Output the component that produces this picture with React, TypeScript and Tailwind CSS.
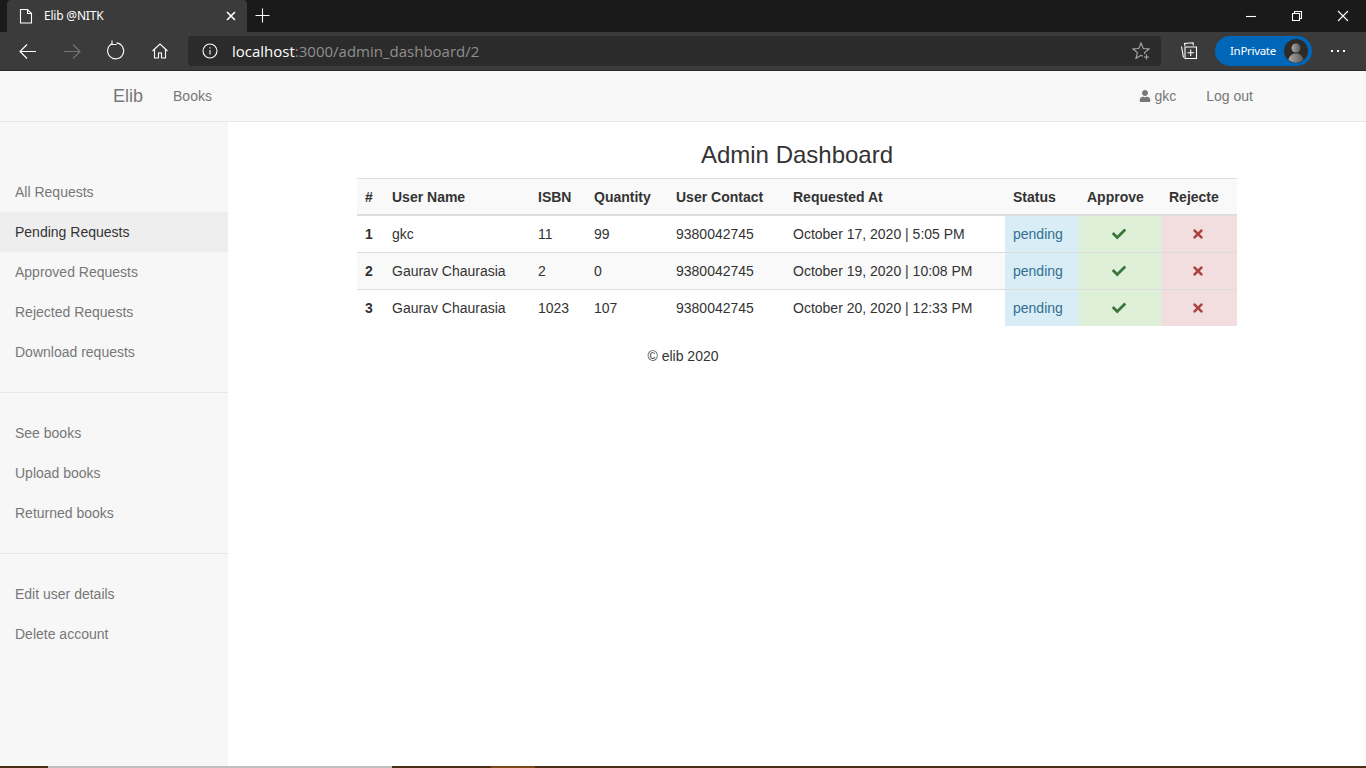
import React from "react";
import { FaCheck, FaTimes, FaUser } from "react-icons/fa";

const rows = [
  ["1", "gkc", "11", "99", "9380042745", "October 17, 2020 | 5:05 PM"],
  ["2", "Gaurav Chaurasia", "2", "0", "9380042745", "October 19, 2020 | 10:08 PM"],
  ["3", "Gaurav Chaurasia", "1023", "107", "9380042745", "October 20, 2020 | 12:33 PM"],
];
const headers = ["#", "User Name", "ISBN", "Quantity", "User Contact", "Requested At", "Status", "Approve", "Rejecte"];
const widths = [27, 146, 56, 82, 117, 220, 74, 82, 76];
const groups = [
  ["All Requests", "Pending Requests", "Approved Requests", "Rejected Requests", "Download requests"],
  ["See books", "Upload books", "Returned books"],
  ["Edit user details", "Delete account"],
];

function Stroke({ w = 20, h = 20, vb = "0 0 20 20", o = 1, children }: { w?: number; h?: number; vb?: string; o?: number; children: React.ReactNode }) {
  return (
    <svg width={w} height={h} viewBox={vb} fill="none" stroke="#fff" strokeWidth="1.1" opacity={o}>
      {children}
    </svg>
  );
}

function BrowserChrome() {
  return (
    <div className="flex flex-col h-[71px] font-['Open_Sans',sans-serif] text-white">
      <div className="flex h-[32px] bg-[#1a1a1a]">
        <div className="ml-[7px] w-[240px] h-[32px] bg-[#3b3b3b] rounded-t-[4px] flex items-center pl-[11px] pr-[10px]">
          <Stroke w={16} h={16} vb="0 0 16 16"><path d="M2.500 1.500h7l4 4v9.500h-11zM9.500 1.500v4h4" /></Stroke>
          <span className="ml-[10px] text-[12px] tracking-[-0.2px] flex-1 font-['Noto_Sans',sans-serif]">Elib @NITK</span>
          <Stroke w={12} h={12} vb="0 0 12 12"><path d="M2 2l8 8M10 2l-8 8" strokeWidth="1.6" /></Stroke>
        </div>
        <div className="ml-[8px] mt-[-1px] flex items-center">
          <Stroke w={15} h={15} vb="0 0 15 15"><path d="M7.500 0.500v14M0.500 7.500h14" /></Stroke>
        </div>
        <div className="ml-auto flex items-center">
          <div className="w-[46px] flex justify-center"><Stroke w={12} h={12} vb="0 0 12 12"><path d="M1 6.500h10" /></Stroke></div>
          <div className="w-[46px] flex justify-center"><Stroke w={12} h={12} vb="0 0 12 12"><path d="M1.500 3.500h7v7h-7zM3.500 3.500v-2h7v7h-2" /></Stroke></div>
          <div className="w-[46px] flex justify-center"><Stroke w={12} h={12} vb="0 0 12 12"><path d="M1 1l10 10M11 1L1 11" /></Stroke></div>
        </div>
      </div>
      <div className="flex items-center h-[38px] bg-[#3b3b3b]">
        <div className="ml-[18px] flex"><Stroke><path d="M18 10.500H2M9 3.500l-7 7 7 7" /></Stroke></div>
        <div className="ml-[24px] flex"><Stroke o={0.3}><path d="M2 10.500h16M11 3.500l7 7-7 7" /></Stroke></div>
        <div className="ml-[24px] flex"><Stroke w={20} h={22} vb="0 0 20 22"><path d="M6.500 3.500a8 8 0 1 0 4-.6M6 0.500v4h4.500" /></Stroke></div>
        <div className="ml-[25px] flex"><Stroke w={18} h={18} vb="0 0 18 18"><path d="M1.500 9L9 2l7.500 7M3.500 7.500V16h4v-5h3v5h4V7.500" /></Stroke></div>
        <div className="ml-[19px] w-[973px] h-[30px] bg-[#2b2b2b] rounded-[4px] flex items-center pl-[14px] pr-[11px]">
          <Stroke w={16} h={16} vb="0 0 16 16"><circle cx="8" cy="8" r="7" /><path d="M8 7v4.500M8 4.200v1.300" /></Stroke>
          <span className="ml-[14px] text-[15px] text-white flex-1">localhost<span className="text-[#8f8f8f]">:3000/admin_dashboard/2</span></span>
          <Stroke w={18} h={18} vb="0 0 18 18" o={0.6}>
            <path d="M12.800 12.200l-.3-1.500L17 7l-5.800-.5L9 1 6.800 6.500 1 7l4.400 3.700L4 16.300l5-3 1.800 1" />
            <path d="M14.500 12.500v5M12 15h5" />
          </Stroke>
        </div>
        <div className="ml-[19px] flex"><Stroke w={18} h={18} vb="0 0 18 18"><path d="M5 4L4.500 1.500 13 0.800l.4 2.700M1.500 4.500l2 11M5 5h11.500v11.500H5zM10.700 7.500v6.500M7.500 10.700H14" /></Stroke></div>
        <div className="ml-[17px] w-[97px] h-[30px] rounded-full bg-[#0067b8] flex items-center pl-[15px] pr-[4px]">
          <span className="text-[11.5px] tracking-[-0.3px] flex-1 font-['Noto_Sans',sans-serif]">InPrivate</span>
          <svg width="24" height="24" viewBox="0 0 24 24">
            <defs>
              <linearGradient id="av" x1="0" x2="1" y1="0" y2="0"><stop offset="0" stopColor="#a8a8a8" /><stop offset="1" stopColor="#5a5a5a" /></linearGradient>
            </defs>
            <circle cx="12" cy="12" r="12" fill="#2e2a28" />
            <circle cx="12" cy="9" r="4.500" fill="url(#av)" />
            <path d="M4.500 21c1-5 4-6.500 7.500-6.500s6.500 1.500 7.500 6.500a12 12 0 0 1-15 0z" fill="url(#av)" />
          </svg>
        </div>
        <div className="ml-[19px] flex gap-[4px]">
          <span className="w-[2px] h-[2px] bg-white" />
          <span className="w-[2px] h-[2px] bg-white" />
          <span className="w-[2px] h-[2px] bg-white" />
        </div>
      </div>
      <div className="h-px bg-[#2a2a2a]" />
    </div>
  );
}

export default function App() {
  return (
    <div className="h-[768px] w-[1366px] overflow-hidden flex flex-col bg-white font-['Liberation_Sans',Arial,sans-serif] text-[14px] text-[#333]">
      <BrowserChrome />
      <nav className="h-[51px] shrink-0 bg-[#f8f8f8] border-b border-[#e7e7e7] flex items-center text-[#777]">
        <span className="ml-[113px] text-[18px]">Elib</span>
        <span className="ml-[30px]">Books</span>
        <span className="ml-auto flex items-center">
          <FaUser className="w-[12px] h-[12px] mr-[3px]" />gkc
        </span>
        <span className="ml-[30px] mr-[113px]">Log out</span>
      </nav>
      <div className="flex flex-1 min-h-0">
        <aside className="w-[228px] shrink-0 bg-[#f7f7f7] pt-[50px] text-[#777]">
          {groups.map((g, i) => (
            <div key={i} className={i < groups.length - 1 ? "pb-[20px] mb-[20px] border-b border-[#e7e7e7]" : ""}>
              {g.map((t) => (
                <div key={t} className={"h-[40px] pl-[15px] flex items-center " + (t === "Pending Requests" ? "bg-[#eee] text-[#333]" : "")}>{t}</div>
              ))}
            </div>
          ))}
        </aside>
        <main className="flex-1 flex flex-col">
          <h1 className="text-[24px] leading-[26px] text-center mt-[20px] mb-[10px] font-normal">Admin Dashboard</h1>
          <table className="w-[880px] mx-auto table-fixed border-collapse leading-[20px]">
            <colgroup>
              {widths.map((w, i) => <col key={i} style={{ width: w }} />)}
            </colgroup>
            <thead>
              <tr className="bg-[#f9f9f9]">
                {headers.map((h) => (
                  <th key={h} className="pt-[8px] pb-[7px] px-[8px] text-left font-bold border-t border-b-2 border-[#ddd] whitespace-nowrap">{h}</th>
                ))}
              </tr>
            </thead>
            <tbody>
              {rows.map((r, i) => (
                <tr key={i} className={i === 1 ? "bg-[#f9f9f9]" : ""}>
                  {r.map((c, j) => (
                    <td key={j} className={"p-[8px] whitespace-nowrap border-[#ddd] " + (i > 0 ? "border-t " : "") + (j === 0 ? "font-bold" : "")}>{c}</td>
                  ))}
                  <td className={"p-[8px] bg-[#d9edf7] text-[#31708f] border-[#ddd] " + (i > 0 ? "border-t" : "")}>pending</td>
                  <td className={"p-[8px] bg-[#dff0d8] border-[#ddd] " + (i > 0 ? "border-t" : "")}>
                    <div className="flex justify-center text-[#3c763d]"><FaCheck className="w-[14px] h-[14px] mr-[2px]" /></div>
                  </td>
                  <td className={"p-[8px] bg-[#f2dede] border-[#ddd] " + (i > 0 ? "border-t" : "")}>
                    <div className="flex justify-center text-[#a94442]"><FaTimes className="w-[14px] h-[14px] mr-[2px]" /></div>
                  </td>
                </tr>
              ))}
            </tbody>
          </table>
          <div className="pr-[228px] mt-[20px] text-center leading-[20px]">© elib 2020</div>
        </main>
      </div>
      <div className="h-[2px] shrink-0 flex bg-[#4a2f14]">
        <div className="ml-[48px] w-[344px] bg-[#c0c0c0]" />
        <div className="ml-[99px] w-[44px] bg-[#7a4a1c]" />
      </div>
    </div>
  );
}
